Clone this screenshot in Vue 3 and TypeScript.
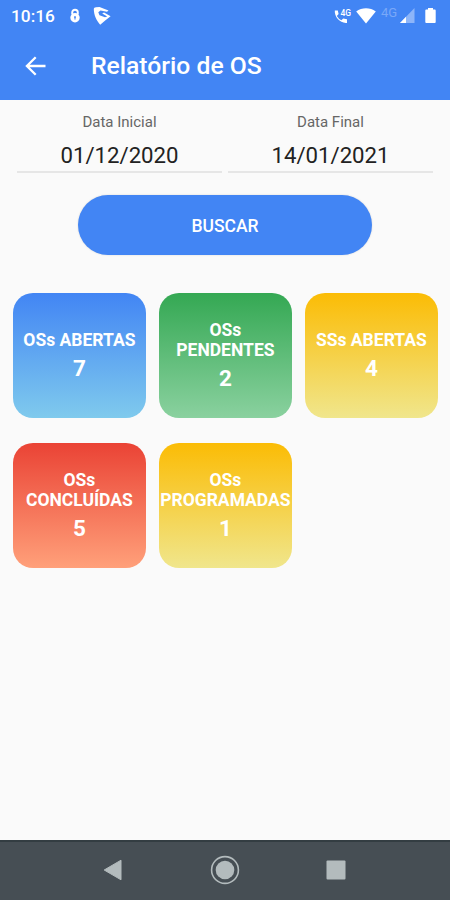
<script setup lang="ts">
interface Field {
  label: string
  value: string
}

interface Card {
  title: string
  count: number
  tone: 'blue' | 'green' | 'yellow' | 'red'
}

const fields: Field[] = [
  { label: 'Data Inicial', value: '01/12/2020' },
  { label: 'Data Final', value: '14/01/2021' },
]

const cards: Card[] = [
  { title: 'OSs ABERTAS', count: 7, tone: 'blue' },
  { title: 'OSs PENDENTES', count: 2, tone: 'green' },
  { title: 'SSs ABERTAS', count: 4, tone: 'yellow' },
  { title: 'OSs CONCLUÍDAS', count: 5, tone: 'red' },
  { title: 'OSs PROGRAMADAS', count: 1, tone: 'yellow' },
]
</script>

<template>
  <div class="screen">
    <header class="top">
      <div class="status">
        <span class="clock">10:16</span>
        <svg class="lock" width="12" height="16" viewBox="0 0 12 16">
          <path d="M3.200 6.500V4.500a2.800 2.800 0 0 1 5.600 0v2" fill="none" stroke="#fff" stroke-width="1.900" />
          <circle cx="6" cy="9.800" r="4.700" fill="#fff" />
          <path d="M6 8a1.200 1.200 0 0 1 .5 2.100l.1 1.300H5.400l.1-1.300A1.200 1.200 0 0 1 6 8z" fill="#4285f4" />
        </svg>
        <svg class="shield" width="19" height="20" viewBox="0 0 19 20">
          <path d="M.8 2.800Q.8 1.400 3 1.200L6.500.9 15.500 4.600 14 5.800 7.500 4.500 5.300 6.200 6.500 9.200 12 11.300 14.200 10.500 9.200 7.500 11 6.600 17.600 10.200 12.500 14.200 7.200 18.800C3.500 14.500.8 9 .8 2.800z" fill="#fff" />
        </svg>
        <div class="signals">
          <svg width="18" height="16" viewBox="0 0 18 16">
            <path d="M.8 2.600h3l.8 3.300-1.800 2a10.600 10.600 0 0 0 4.600 4.300l1.800-1.700 3.800.8v3.600C6.500 15.800.3 9.300.8 2.600z" fill="#fff" />
            <text x="6.500" y="8.200" class="call-net">4G</text>
          </svg>
          <svg class="wifi" width="20" height="16" viewBox="0 0 20 16">
            <path d="M.2 3.500C6-.7 14-.7 19.800 3.500L10 15.600z" fill="#fff" />
          </svg>
          <span class="net">4G</span>
          <svg class="cell" width="15" height="15" viewBox="0 0 15 15">
            <path d="M14.500 0v15H0z" fill="#8db5f9" />
            <path d="M6 8.800V15H0z" fill="#fff" />
          </svg>
          <svg class="battery" width="11" height="15" viewBox="0 0 11 15">
            <path d="M3 0h5v1.500h1.800q.9 0 .9.900v11.700q0 .9-.9.900H1.200q-.9 0-.9-.9V2.400q0-.9.900-.9H3z" fill="#fff" />
          </svg>
        </div>
      </div>
      <div class="bar">
        <svg class="back" width="22" height="20" viewBox="0 0 22 20">
          <path d="M20.500 10H2M10.700 1.200 1.900 10l8.800 8.800" fill="none" stroke="#fff" stroke-width="2.300" />
        </svg>
        <h1>Relatório de OS</h1>
      </div>
    </header>

    <main>
      <div class="fields">
        <label v-for="f in fields" :key="f.label" class="field">
          <span class="label">{{ f.label }}</span>
          <span class="value">{{ f.value }}</span>
        </label>
      </div>
      <button class="search" type="button">BUSCAR</button>
      <section class="cards">
        <article v-for="c in cards" :key="c.title" class="card" :class="c.tone">
          <span class="title">{{ c.title }}</span>
          <span class="count">{{ c.count }}</span>
        </article>
      </section>
    </main>

    <nav class="nav">
      <svg width="20" height="22" viewBox="0 0 20 22">
        <path d="M18 1.200v19.600L1.200 11z" fill="#b3bbbd" stroke="#b3bbbd" stroke-linejoin="round" />
      </svg>
      <svg width="30" height="30" viewBox="0 0 30 30">
        <circle cx="15" cy="15" r="13.400" fill="none" stroke="#b3bbbd" stroke-width="1.600" />
        <circle cx="15" cy="15" r="9.300" fill="#b3bbbd" />
      </svg>
      <svg width="20" height="20" viewBox="0 0 20 20">
        <rect x=".5" y=".5" width="19" height="19" rx="1" fill="#b3bbbd" />
      </svg>
    </nav>
  </div>
</template>

<style>
body {
  margin: 0;
}
</style>

<style scoped>
.screen {
  display: flex;
  flex-direction: column;
  width: 450px;
  height: 900px;
  overflow: hidden;
  background: #fafafa;
  font-family: Roboto, sans-serif;
}

.top {
  height: 100px;
  background: #4285f4;
  color: #fff;
}

.status {
  display: flex;
  align-items: center;
  height: 31px;
  padding: 0 14px 0 11px;
}

.clock {
  width: 44px;
  font-size: 17.300px;
  font-weight: 500;
  white-space: nowrap;
}

.lock {
  margin-left: 14px;
}

.shield {
  margin-left: 12px;
}

.signals {
  display: flex;
  align-items: center;
  margin-left: auto;
}

.call-net {
  fill: #fff;
  font-size: 8.500px;
  font-weight: 500;
}

.wifi {
  margin-left: 4px;
}

.net {
  width: 17px;
  margin: -6px 0 0 5px;
  color: #79a8f8;
  font-size: 13px;
  line-height: 16px;
}

.cell {
  margin-left: 2px;
}

.battery {
  margin-left: 10px;
}

.bar {
  display: flex;
  align-items: center;
  height: 69px;
  padding-left: 25px;
}

h1 {
  margin: 1px 0 0 44px;
  font-size: 24.700px;
  font-weight: 500;
  line-height: 32px;
}

main {
  flex: 1;
  display: flex;
  flex-direction: column;
  align-items: center;
}

.fields {
  display: grid;
  grid-template-columns: 205px 205px;
  gap: 6px;
  height: 73px;
}

.field {
  display: flex;
  flex-direction: column;
  align-items: center;
  padding-top: 12px;
  border-bottom: 2px solid #e6e6e6;
  box-sizing: border-box;
  height: 73px;
}

.label {
  color: #666;
  font-size: 15px;
  line-height: 20px;
}

.value {
  margin-top: 9px;
  color: #222;
  font-size: 22.200px;
  line-height: 28px;
}

.search {
  width: 294px;
  height: 60px;
  margin-top: 22.400px;
  padding: 1px 0 0;
  border: 0;
  border-radius: 30px;
  background: #4285f4;
  box-shadow: 0 0 2px rgba(0, 0, 0, 0.15);
  color: #fff;
  font: 500 17.500px Roboto, sans-serif;
}

.cards {
  display: grid;
  grid-template-columns: repeat(3, 133.500px);
  grid-auto-rows: 125px;
  gap: 25px 12.500px;
  margin: 37.600px 0 0 0.800px;
}

.card {
  display: flex;
  flex-direction: column;
  align-items: center;
  justify-content: center;
  box-sizing: border-box;
  padding-top: 3px;
  border-radius: 20px;
  color: #fff;
  font-weight: 700;
  text-align: center;
}

.title {
  font-size: 17.500px;
  line-height: 20px;
}

.count {
  margin-top: 3px;
  font-size: 22.500px;
  line-height: 30px;
}

.blue {
  background: linear-gradient(#4285f4, #7fcaed);
}

.green {
  background: linear-gradient(#34a853, #8ad19f);
}

.yellow {
  background: linear-gradient(#fbbc05, #f0e68c);
}

.red {
  background: linear-gradient(#ea4335, #ffa07a);
}

.nav {
  display: flex;
  align-items: center;
  justify-content: space-between;
  box-sizing: border-box;
  height: 60px;
  padding: 0 104px 2px 103px;
  border-top: 2px solid #333d42;
  background: #464e54;
}
</style>
